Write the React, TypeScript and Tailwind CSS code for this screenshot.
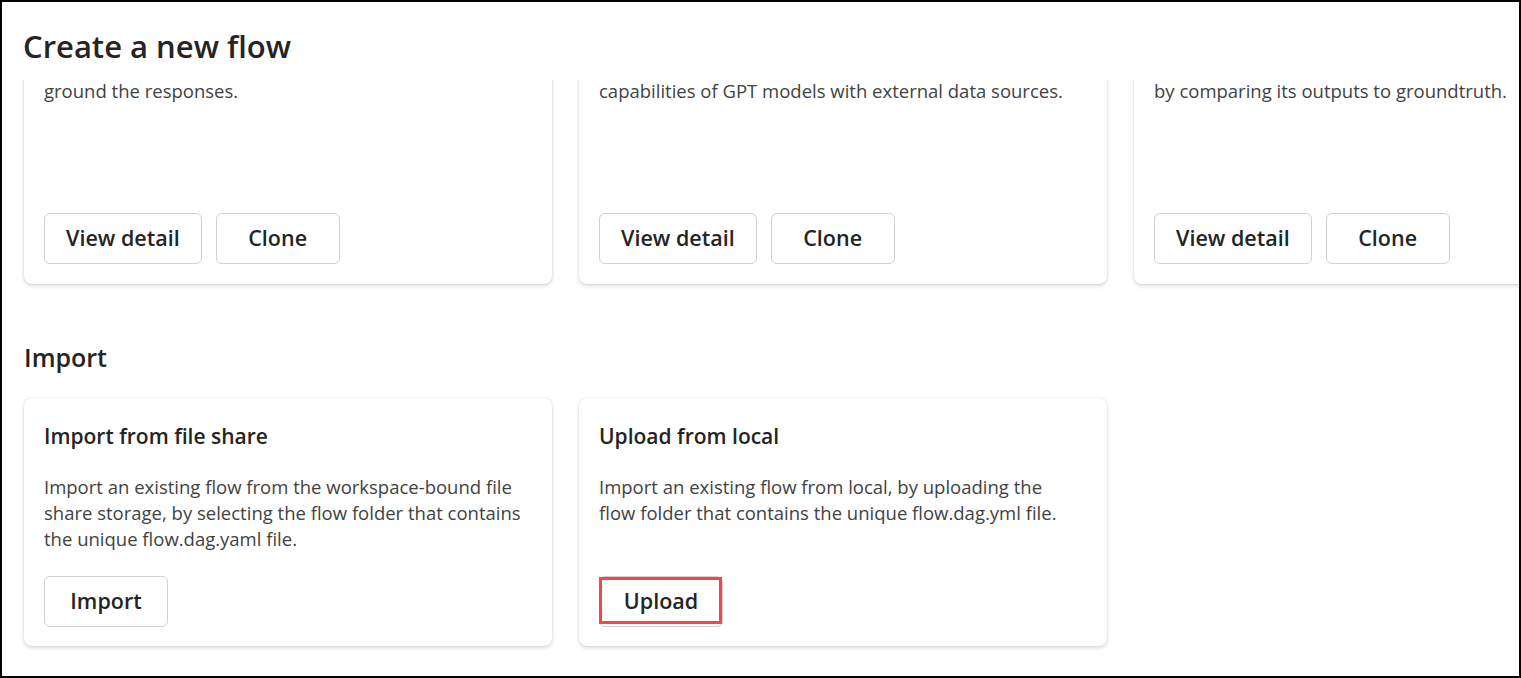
import React from "react";

type Sample = { title: string; lines: string[] };

const samples: Sample[] = [
  { title: "Chat with Wikipedia", lines: ["ChatGPT-based chatbot that leverages Wikipedia data to", "ground the responses."] },
  { title: "Bring your own data QnA", lines: ["Create a flow that augments the question-answering", "capabilities of GPT models with external data sources."] },
  { title: "Classification accuracy evaluation", lines: ["Evaluate the performance of a classification system", "by comparing its outputs to groundtruth."] },
];

function FlowButton({ children, highlight }: { children: React.ReactNode; highlight?: boolean }) {
  return (
    <button className="relative h-[51px] min-w-[124px] px-[21px] rounded-md border border-[#d1d1d1] bg-white text-[21.5px] font-semibold text-[#242424]">
      {children}
      {highlight && <span className="absolute -left-px -right-0 top-0 bottom-[2px] border-[3px] border-[#f24848]" />}
    </button>
  );
}

function GalleryCard({ sample }: { sample: Sample }) {
  return (
    <div className="h-[300px] w-[528px] shrink-0 rounded-lg bg-white px-5 pt-5 pb-5 flex flex-col shadow-[0_2px_4px_rgba(0,0,0,0.14),0_0_2px_rgba(0,0,0,0.12)]">
      <h3 className="text-[21px] leading-8 font-semibold text-[#242424]">{sample.title}</h3>
      <p className="mt-4 text-[18.5px] leading-[26px] text-[#424242] whitespace-nowrap">
        {sample.lines[0]}
        <br />
        {sample.lines[1]}
      </p>
      <div className="mt-auto flex gap-[14px]">
        <FlowButton>View detail</FlowButton>
        <FlowButton>Clone</FlowButton>
      </div>
    </div>
  );
}

function ImportCard({ title, desc, action, highlight }: { title: string; desc: string; action: string; highlight?: boolean }) {
  return (
    <div className="h-[248px] w-[528px] rounded-lg bg-white px-5 pt-[22px] pb-[19px] flex flex-col shadow-[0_2px_4px_rgba(0,0,0,0.14),0_0_2px_rgba(0,0,0,0.12)]">
      <h3 className="text-[21px] leading-8 font-semibold text-[#242424]">{title}</h3>
      <p className="mt-[22px] max-w-[480px] text-[18.5px] leading-[26px] text-[#424242]">{desc}</p>
      <div className="mt-auto flex">
        <FlowButton highlight={highlight}>{action}</FlowButton>
      </div>
    </div>
  );
}

export default function App() {
  return (
    <div className="h-[678px] w-full border-2 border-black bg-white flex flex-col overflow-hidden font-['Segoe_UI','Open_Sans',sans-serif]">
      <header className="h-[78px] shrink-0 px-[21px] pt-[24px]">
        <h1 className="text-[31px] leading-[40px] font-semibold text-[#242424]">Create a new flow</h1>
      </header>
      <div className="flex-1 overflow-hidden">
        <div className="-mt-[96px] pl-[22px]">
          <div className="flex gap-[27px]">
            {samples.map((s) => (
              <GalleryCard key={s.title} sample={s} />
            ))}
          </div>
          <h2 className="mt-[57px] text-[25px] leading-8 font-semibold text-[#242424]">Import</h2>
          <div className="mt-[25px] flex gap-[27px]">
            <ImportCard
              title="Import from file share"
              desc="Import an existing flow from the workspace-bound file share storage, by selecting the flow folder that contains the unique flow.dag.yaml file."
              action="Import"
            />
            <ImportCard
              title="Upload from local"
              desc="Import an existing flow from local, by uploading the flow folder that contains the unique flow.dag.yml file."
              action="Upload"
              highlight
            />
          </div>
        </div>
      </div>
    </div>
  );
}
